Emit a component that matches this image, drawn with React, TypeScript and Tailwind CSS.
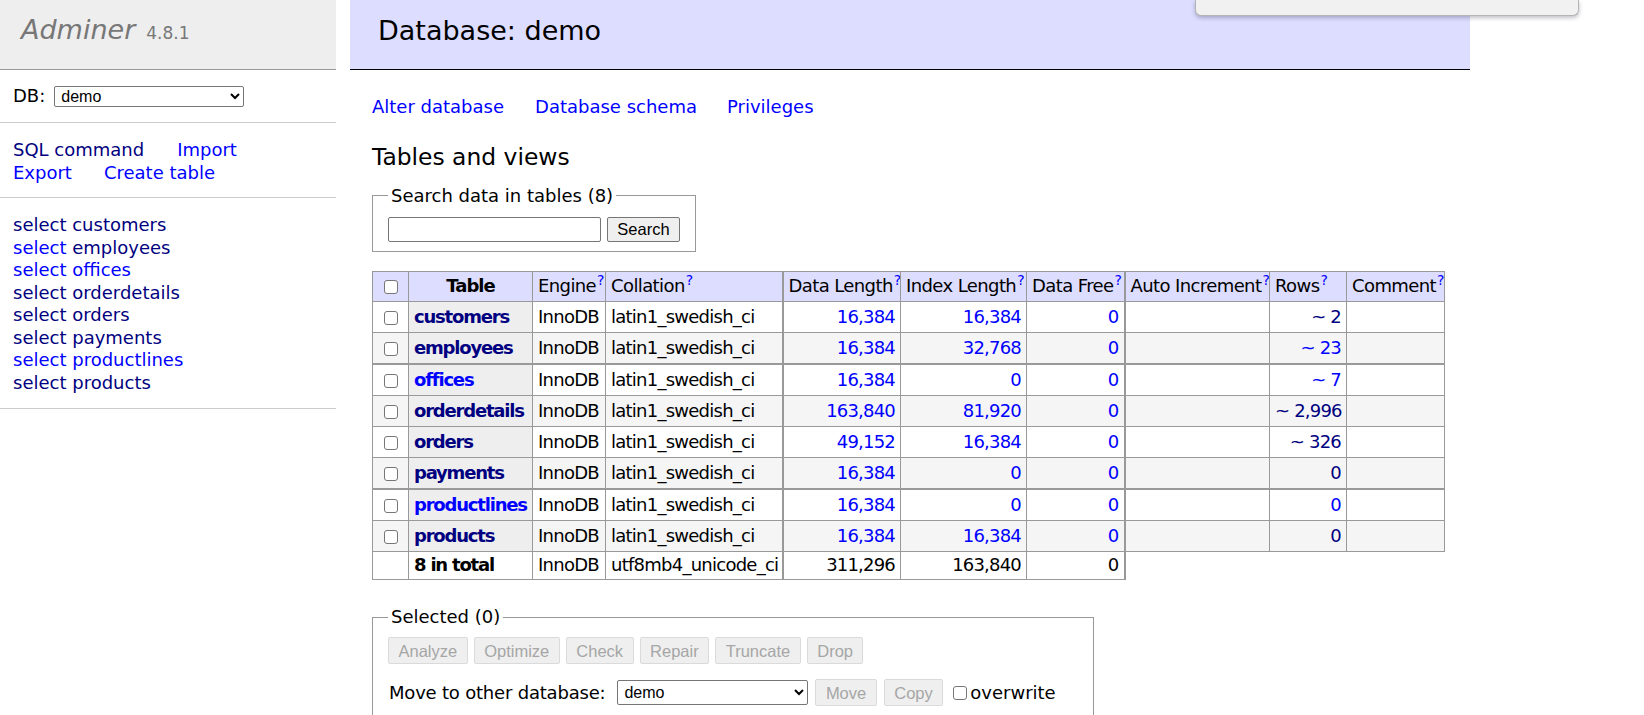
import React from "react";

const NAVY = "text-[#000080]";
const BLUE = "text-[#0000ff]";

const TABLES = [
  { name: "customers", nameC: NAVY, selC: NAVY, dl: "16,384", il: "16,384", rows: "~ 2", rowsC: NAVY },
  { name: "employees", nameC: NAVY, selC: BLUE, dl: "16,384", il: "32,768", rows: "~ 23", rowsC: BLUE },
  { name: "offices", nameC: BLUE, selC: BLUE, dl: "16,384", il: "0", rows: "~ 7", rowsC: BLUE },
  { name: "orderdetails", nameC: NAVY, selC: NAVY, dl: "163,840", il: "81,920", rows: "~ 2,996", rowsC: NAVY },
  { name: "orders", nameC: NAVY, selC: NAVY, dl: "49,152", il: "16,384", rows: "~ 326", rowsC: NAVY },
  { name: "payments", nameC: NAVY, selC: NAVY, dl: "16,384", il: "0", rows: "0", rowsC: NAVY },
  { name: "productlines", nameC: BLUE, selC: BLUE, dl: "16,384", il: "0", rows: "0", rowsC: BLUE },
  { name: "products", nameC: NAVY, selC: NAVY, dl: "16,384", il: "16,384", rows: "0", rowsC: NAVY },
];

const HEADS = [
  { label: "Engine", w: "w-[73px]" },
  { label: "Collation", w: "w-[177px]", thick: true },
  { label: "Data Length", w: "w-[118px]" },
  { label: "Index Length", w: "w-[126px]" },
  { label: "Data Free", w: "w-[98px]", thick: true },
  { label: "Auto Increment", w: "w-[145px]" },
  { label: "Rows", w: "w-[77px]" },
  { label: "Comment", w: "w-[98px]" },
];

const ACTIONS = ["Analyze", "Optimize", "Check", "Repair", "Truncate", "Drop"];

function Help() {
  return <sup className="text-[14px] text-[#0000ff] ml-[1px] tracking-normal">?</sup>;
}

function Check() {
  return (
    <input
      type="checkbox"
      className="appearance-none w-[14px] h-[14px] border border-[#767676] rounded-[3px] bg-white align-middle"
    />
  );
}

function Sidebar() {
  return (
    <div className="w-[336px] shrink-0">
      <div className="h-[70px] bg-[#eeeeee] border-b border-[#999999] pl-[21px] pt-[13px]">
        <span className="text-[27px] leading-[34px] italic text-[#777777]">Adminer</span>
        <span className="text-[17px] text-[#777777] ml-[11px]">4.8.1</span>
      </div>

      <div className="h-[53px] flex items-center pl-[13px] border-b border-[#cccccc]">
        <span>DB:</span>
        <select className="ml-[9px] w-[190px] h-[21px] border border-[#767676] rounded-[2px] bg-white font-['Liberation_Sans',sans-serif] text-[16px] leading-[19px] pl-[2px]">
          <option>demo</option>
        </select>
      </div>

      <div className="pl-[13px] pt-[16px] pb-[13px] border-b border-[#cccccc]">
        <p>
          <a className={`${NAVY} mr-[33px]`}>SQL command</a>
          <a className={BLUE}>Import</a>
        </p>
        <p>
          <a className={`${BLUE} mr-[32px]`}>Export</a>
          <a className={BLUE}>Create table</a>
        </p>
      </div>

      <ul className="pl-[13px] pt-[16px] pb-[14px] border-b border-[#cccccc]">
        {TABLES.map((t) => (
          <li key={t.name}>
            <a className={t.selC}>select</a> <a className={t.nameC}>{t.name}</a>
          </li>
        ))}
      </ul>
    </div>
  );
}

function DisabledButton({ label }: { label: string }) {
  return (
    <button
      disabled
      className="h-[27px] px-[9.5px] bg-[#efefef] border border-[#dadada] rounded-[2px] text-[#a6a6a6] font-['Liberation_Sans',sans-serif] text-[16.5px]"
    >
      {label}
    </button>
  );
}

export default function App() {
  const td = "border border-[#999999] px-[5px] whitespace-nowrap overflow-hidden";
  const num = "text-right tracking-[-0.8px]";
  const bold = "text-left font-bold tracking-[-1.2px]";
  return (
    <div className="relative min-h-[715px] bg-white text-black font-['DejaVu_Sans',Verdana,sans-serif] text-[18px] leading-[22.5px]">
      {/* dropdown panel peeking from the top */}
      <div className="absolute top-0 left-[1195px] w-[384px] h-[16px] bg-[#f1f1f1] border border-t-0 border-[#b4b4b4] rounded-b-[6px] shadow-[0_2px_4px_rgba(0,0,40,0.25)]" />

      <div className="flex">
        <Sidebar />

        <div className="ml-[14px] w-[1120px]">
          <h2 className="h-[70px] bg-[#ddddff] border-b border-black pl-[28px] pt-[14px] text-[27px] leading-[34px]">
            Database: demo
          </h2>

          <div className="pl-[22px]">
            <p className="mt-[26px]">
              <a className={`${BLUE} mr-[31px]`}>Alter database</a>
              <a className={`${BLUE} mr-[30px]`}>Database schema</a>
              <a className={BLUE}>Privileges</a>
            </p>

            <h3 className="mt-[24px] text-[23.4px] leading-[29px]">Tables and views</h3>

            <fieldset className="mt-[13px] w-[322px] border border-[#999999] px-[15px] pt-[10px] pb-[9px]">
              <legend className="px-[3px]">Search data in tables (8)</legend>
              <div className="flex gap-[6px]">
                <input className="w-[213px] h-[25px] border border-[#767676] rounded-[2px] bg-white" />
                <button className="w-[73px] h-[25px] border border-[#767676] rounded-[2px] bg-[#efefef] font-['Liberation_Sans',sans-serif] text-[16.5px]">
                  Search
                </button>
              </div>
            </fieldset>

            <table className="mt-[19px] w-[1072px] table-fixed border-collapse">
              <thead>
                <tr className="h-[30px] bg-[#ddddff]">
                  <td className={`${td} w-[36px] text-center`}>
                    <Check />
                  </td>
                  <th className={`${td} w-[124px] text-center font-bold tracking-[-1px]`}>Table</th>
                  {HEADS.map((h) => (
                    <th
                      key={h.label}
                      className={`${td} ${h.w} ${h.thick ? "border-r-2" : ""} text-left font-normal tracking-[-0.6px]`}
                    >
                      {h.label}
                      <Help />
                    </th>
                  ))}
                </tr>
              </thead>
              <tbody className="tracking-[-0.75px]">
                {TABLES.map((t, i) => (
                  <tr
                    key={t.name}
                    className={`h-[31.3px] ${i % 2 === 1 ? "bg-[#f5f5f5]" : "bg-white"} ${i === 1 || i === 5 ? "border-b-2 border-[#999999]" : ""}`}
                  >
                    <td className={`${td} text-center`}>
                      <Check />
                    </td>
                    <th className={`${td} bg-[#eeeeee] ${bold} ${t.nameC}`}>{t.name}</th>
                    <td className={td}>InnoDB</td>
                    <td className={`${td} border-r-2`}>latin1_swedish_ci</td>
                    <td className={`${td} ${num} ${BLUE}`}>{t.dl}</td>
                    <td className={`${td} ${num} ${BLUE}`}>{t.il}</td>
                    <td className={`${td} border-r-2 ${num} ${BLUE}`}>0</td>
                    <td className={td}></td>
                    <td className={`${td} ${num} ${t.rowsC}`}>{t.rows}</td>
                    <td className={td}></td>
                  </tr>
                ))}
                <tr className="h-[27.6px] bg-white">
                  <td className={td}></td>
                  <th className={`${td} ${bold}`}>8 in total</th>
                  <td className={td}>InnoDB</td>
                  <td className={`${td} border-r-2`}>utf8mb4_unicode_ci</td>
                  <td className={`${td} ${num}`}>311,296</td>
                  <td className={`${td} ${num}`}>163,840</td>
                  <td className={`${td} border-r-2 ${num}`}>0</td>
                </tr>
              </tbody>
            </table>

            <fieldset className="mt-[26px] w-[722px] border border-[#999999] px-[15px] pt-[9px] pb-[10px]">
              <legend className="px-[3px]">Selected (0)</legend>
              <div className="flex gap-[6px]">
                {ACTIONS.map((a) => (
                  <DisabledButton key={a} label={a} />
                ))}
              </div>
              <div className="flex items-center mt-[15px]">
                <span className="ml-[1px] tracking-[-0.2px]">Move to other database:</span>
                <select className="ml-[12px] w-[191px] h-[25px] border border-[#767676] rounded-[2px] bg-white font-['Liberation_Sans',sans-serif] text-[16px] pl-[2px]">
                  <option>demo</option>
                </select>
                <div className="ml-[7px] flex gap-[7px]">
                  <DisabledButton label="Move" />
                  <DisabledButton label="Copy" />
                </div>
                <label className="ml-[10px] flex items-center">
                  <span className="mr-[3px] flex">
                    <Check />
                  </span>
                  overwrite
                </label>
              </div>
            </fieldset>
          </div>
        </div>
      </div>
    </div>
  );
}
